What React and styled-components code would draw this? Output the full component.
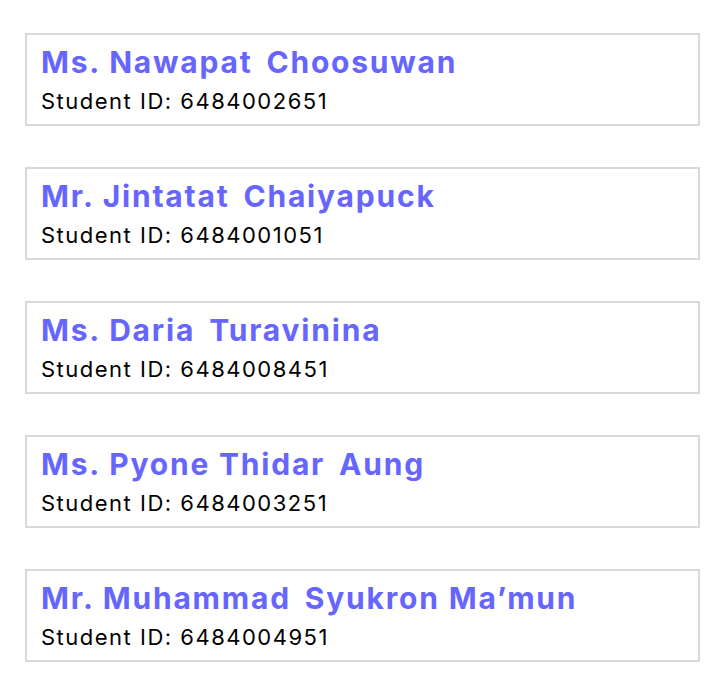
import React from "react";
import styled, { createGlobalStyle } from "styled-components";

const Global = createGlobalStyle`
  html, body { margin: 0; padding: 0; background: #ffffff; }
  body { font-family: Inter, "Noto Sans", sans-serif; }
`;

const Page = styled.div`
  display: flex;
  flex-direction: column;
  gap: 41px;
  padding: 33px 0 0 25px;
  width: 675px;
`;

const Card = styled.div`
  border: 2px solid #d9d9d9;
  height: 93px;
  padding: 9px 14px 0 14px;
  box-sizing: border-box;
  display: flex;
  flex-direction: column;
`;

const Name = styled.div`
  display: flex;
  gap: 5px;
  color: #6666ff;
  font-weight: 700;
  font-size: 30px;
  line-height: 36px;
  letter-spacing: 1.8px;
  white-space: pre;
`;

const Id = styled.div`
  color: #000;
  font-size: 22px;
  line-height: 28px;
  letter-spacing: 1.5px;
  margin-top: 7px;
`;

const students = [
  { first: "Ms. Nawapat", last: "Choosuwan", id: "6484002651" },
  { first: "Mr. Jintatat", last: "Chaiyapuck", id: "6484001051" },
  { first: "Ms. Daria", last: "Turavinina", id: "6484008451" },
  { first: "Ms. Pyone Thidar", last: "Aung", id: "6484003251" },
  { first: "Mr. Muhammad", last: "Syukron Ma\u2019mun", id: "6484004951" },
];

export default function App() {
  return (
    <>
      <Global />
      <Page>
        {students.map((s) => (
          <Card key={s.id}>
            <Name>
              <span>{s.first} </span>
              <span>{s.last}</span>
            </Name>
            <Id>Student ID: {s.id}</Id>
          </Card>
        ))}
      </Page>
    </>
  );
}
